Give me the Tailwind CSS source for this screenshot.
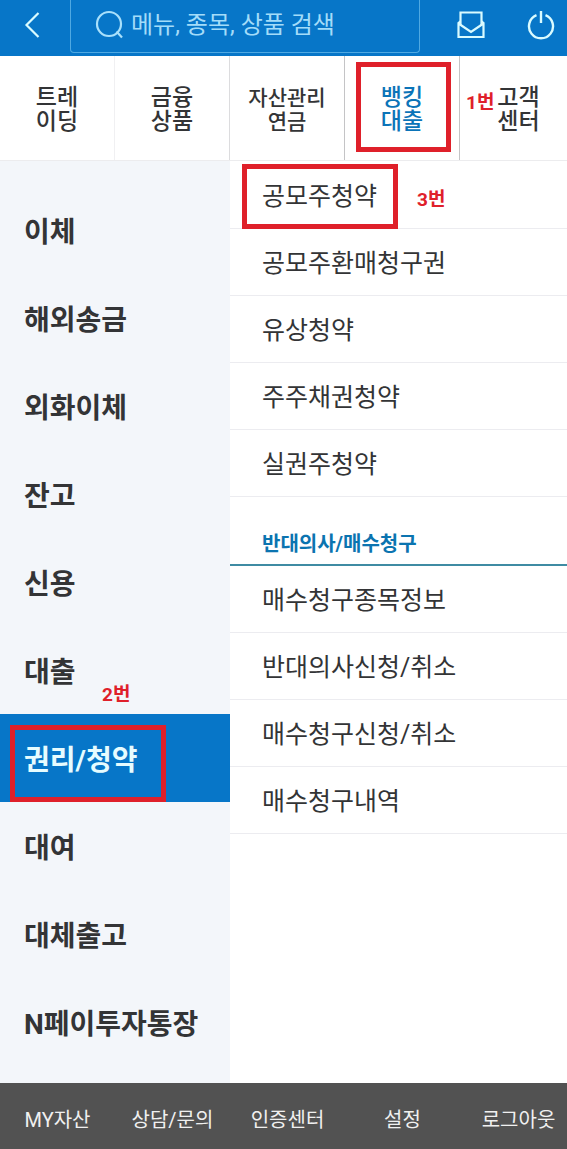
<!DOCTYPE html>
<html lang="ko">
<head>
    <meta charset="UTF-8">
    <meta name="viewport" content="width=device-width, initial-scale=1.0">
    <title>전체 메뉴</title>
    <script src="https://cdn.jsdelivr.net/npm/@tailwindcss/browser@4"></script>
</head>
<body class="min-h-screen flex flex-col bg-white text-[#333436] font-[Roboto,'Noto_Sans_CJK_KR',sans-serif]">
    <!-- 상단 검색 영역 -->
    <header class="h-14 flex items-start bg-[#0776c8] text-[#d9fbff]">
        <button type="button" aria-label="뒤로" class="w-[70px] h-[50px] pl-6 flex items-center">
            <svg class="w-4 h-7" viewBox="0 0 16 28" fill="none" stroke="currentColor" stroke-width="2.2">
                <path d="M14.5 2 2.5 14l12 12"/>
            </svg>
        </button>
        <label class="flex-1 min-w-0 h-[53px] pl-6 flex items-start gap-2 border border-t-0 border-[#4fa9e2] rounded-b-sm">
            <svg class="w-7 h-[50px] shrink-0" viewBox="0 0 28 50" fill="none" stroke="#a9e0fb" stroke-width="2.2">
                <circle cx="14" cy="24" r="12"/>
                <path d="m21.5 31.5 5.5 6"/>
            </svg>
            <input type="search" aria-label="검색" placeholder="메뉴, 종목, 상품 검색"
                   class="flex-1 min-w-0 h-[50px] bg-transparent text-2xl outline-none placeholder:text-[#a3dcf9]">
        </label>
        <div class="w-[147px] h-[50px] pl-9 pr-3 flex items-center justify-between">
            <button type="button" aria-label="메시지함">
                <svg class="w-[30px] h-7" viewBox="0 0 30 28" fill="none" stroke="currentColor" stroke-width="2.2">
                    <path d="M4.5 14.5V1.5h21v13"/>
                    <path d="M4.5 10.500 2.5 12v14h25V12l-2-1.500"/>
                    <path d="m2.5 12.500 12.500 8.500L27.500 12.500"/>
                </svg>
            </button>
            <button type="button" aria-label="종료">
                <svg class="w-7 h-[30px]" viewBox="0 0 28 30" fill="none" stroke="currentColor" stroke-width="2.4">
                    <path d="M9.5 5.2a12 12 0 1 0 9 0"/>
                    <path d="M14 1v12"/>
                </svg>
            </button>
        </div>
    </header>

    <!-- 대분류 탭 -->
    <nav class="h-[105px] grid grid-cols-[115fr_115fr_115fr_115fr_107fr] border-b border-[#ececee] text-[23px] leading-6 font-medium text-center">
        <a href="#" class="pt-1 flex items-center justify-center border-r border-[#f0f0f2]">트레<br>이딩</a>
        <a href="#" class="pt-1 flex items-center justify-center border-r border-[#dcdcde]">금융<br>상품</a>
        <a href="#" class="pt-1 flex items-center justify-center border-r border-[#c4c4c6] text-[21px]">자산관리<br>연금</a>
        <a href="#" class="relative pt-1 flex items-center justify-center border-r border-[#c4c4c6] text-[#0b74b8]">
            뱅킹<br>대출
            <span class="absolute left-[11px] right-2 top-[6px] bottom-2 border-5 border-[#df202a]"></span>
        </a>
        <a href="#" class="relative pt-1 pl-2.5 flex items-center justify-center">
            고객<br>센터
            <span class="absolute left-[6px] top-[35px] text-[19px] font-bold text-[#df202a]">1번</span>
        </a>
    </nav>

    <main class="flex-1 flex">
        <!-- 중분류 -->
        <ul class="w-[230px] shrink-0 pt-[25px] pb-[17px] bg-[#f3f6fa] text-[28px] font-bold">
            <li><a href="#" class="h-[88px] pt-1.5 pl-6 flex items-center">이체</a></li>
            <li><a href="#" class="h-[88px] pt-1.5 pl-6 flex items-center">해외송금</a></li>
            <li><a href="#" class="h-[88px] pt-1.5 pl-6 flex items-center">외화이체</a></li>
            <li><a href="#" class="h-[88px] pt-1.5 pl-6 flex items-center">잔고</a></li>
            <li><a href="#" class="h-[88px] pt-1.5 pl-6 flex items-center">신용</a></li>
            <li><a href="#" class="h-[88px] pt-1.5 pl-6 flex items-center">대출</a></li>
            <li class="relative bg-[#0776c8] text-[#e6fcff]">
                <a href="#" class="h-[88px] pt-1.5 pl-6 flex items-center">권리/청약</a>
                <span class="absolute left-[10px] top-[11px] bottom-0 w-[156px] border-5 border-[#df202a]"></span>
                <span class="absolute left-[102px] top-[-31px] text-[19px] leading-6 text-[#df202a]">2번</span>
            </li>
            <li><a href="#" class="h-[88px] pt-1.5 pl-6 flex items-center">대여</a></li>
            <li><a href="#" class="h-[88px] pt-1.5 pl-6 flex items-center">대체출고</a></li>
            <li><a href="#" class="h-[88px] pt-1.5 pl-6 flex items-center">N페이투자통장</a></li>
        </ul>

        <!-- 소분류 -->
        <section class="flex-1 pt-px text-[25px]">
            <ul>
                <li class="relative">
                    <a href="#" class="h-[67px] pt-1 pl-8 flex items-center border-b border-[#ececf0]">공모주청약</a>
                    <span class="absolute left-3 top-[2px] bottom-0 w-[156px] border-5 border-[#df202a]"></span>
                    <span class="absolute left-[187px] top-[26px] text-[19px] leading-6 font-bold text-[#df202a]">3번</span>
                </li>
                <li><a href="#" class="h-[67px] pt-1 pl-8 flex items-center border-b border-[#ececf0]">공모주환매청구권</a></li>
                <li><a href="#" class="h-[67px] pt-1 pl-8 flex items-center border-b border-[#ececf0]">유상청약</a></li>
                <li><a href="#" class="h-[67px] pt-1 pl-8 flex items-center border-b border-[#ececf0]">주주채권청약</a></li>
                <li><a href="#" class="h-[67px] pt-1 pl-8 flex items-center border-b border-[#ececf0]">실권주청약</a></li>
            </ul>
            <h2 class="h-[69px] pl-8 pb-1.5 flex items-end border-b-2 border-[#3f8ba3] text-xl font-bold text-[#0b74b0]">반대의사/매수청구</h2>
            <ul>
                <li><a href="#" class="h-[67px] pt-1 pl-8 flex items-center border-b border-[#ececf0]">매수청구종목정보</a></li>
                <li><a href="#" class="h-[67px] pt-1 pl-8 flex items-center border-b border-[#ececf0]">반대의사신청/취소</a></li>
                <li><a href="#" class="h-[67px] pt-1 pl-8 flex items-center border-b border-[#ececf0]">매수청구신청/취소</a></li>
                <li><a href="#" class="h-[67px] pt-1 pl-8 flex items-center border-b border-[#ececf0]">매수청구내역</a></li>
            </ul>
        </section>
    </main>

    <!-- 하단 메뉴 -->
    <footer class="h-[66px] grid grid-cols-[115fr_115fr_115fr_115fr_107fr] bg-[#525252] text-xl text-[#f0f0f0]">
        <a href="#" class="pt-2 flex items-center justify-center">MY자산</a>
        <a href="#" class="pt-2 flex items-center justify-center">상담/문의</a>
        <a href="#" class="pt-2 flex items-center justify-center">인증센터</a>
        <a href="#" class="pt-2 flex items-center justify-center">설정</a>
        <a href="#" class="pt-2 pl-2.5 flex items-center justify-center">로그아웃</a>
    </footer>
</body>
</html>
